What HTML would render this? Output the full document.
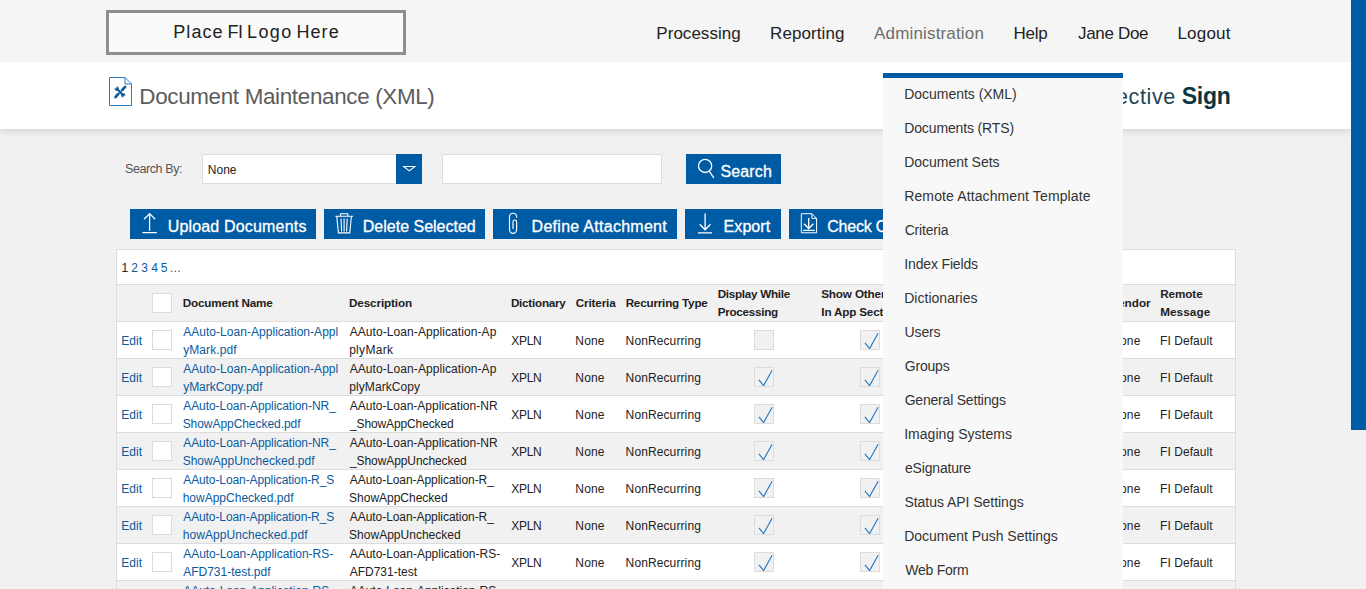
<!DOCTYPE html>
<html lang="en"><head><meta charset="utf-8"><title>Document Maintenance (XML)</title>
<style>
html,body{margin:0;padding:0}
body{width:1366px;height:589px;overflow:hidden;position:relative;background:#f1f1f1;font-family:"Liberation Sans",sans-serif;}
.b{position:absolute;box-sizing:border-box}
.b svg{display:block}
.t{position:absolute;white-space:pre;line-height:normal;font-family:"Liberation Sans",sans-serif;}
#page{position:absolute;left:0;top:0;width:1366px;height:589px;overflow:hidden}
</style></head><body><div id="page">
<div class="b" style="left:0px;top:62px;width:1351px;height:67px;background:#fff;box-shadow:0 3px 6px rgba(0,0,0,.10)"></div>
<div class="b" style="left:0px;top:0px;width:1351px;height:62px;background:#f5f5f5"></div>
<div class="b" style="left:106px;top:10px;width:300px;height:45px;box-sizing:border-box;border:3px solid #8e8e8e;background:#fafafa"></div>
<div class="b" style="left:202px;top:154px;width:220px;height:30px;box-sizing:border-box;border:1px solid #ddd;background:#fff"></div>
<div class="b" style="left:396px;top:154px;width:26px;height:30px;background:#005ba5"><svg width="26" height="30" viewBox="0 0 26 30"><path d="M7.600 12.450h11.400l-5.700 4.500z" fill="none" stroke="#fff" stroke-width="1.05" stroke-linejoin="miter"/></svg></div>
<div class="b" style="left:442px;top:154px;width:220px;height:30px;box-sizing:border-box;border:1px solid #ddd;background:#fff"></div>
<div class="b" style="left:686px;top:154px;width:95px;height:30px;background:#005ba5"><svg width="95" height="30" viewBox="0 0 95 30"><circle cx="19.1" cy="11.9" r="6.6" fill="none" stroke="#fff" stroke-width="1.3"/><path d="M23.2 17.2l4.6 6.6" stroke="#fff" stroke-width="1.3" fill="none"/></svg></div>
<div class="b" style="left:130px;top:209px;width:186px;height:30px;background:#005ba5"><svg width="186" height="30" viewBox="0 0 186 30"><path d="M19.6 4.7v17M14 10.2l5.6-5.6 5.6 5.6M12.4 23.7h14.5" stroke="#fff" stroke-width="1.3" fill="none"/></svg></div>
<div class="b" style="left:324px;top:209px;width:161px;height:30px;background:#005ba5"><svg width="161" height="30" viewBox="0 0 161 30"><path d="M11.3 7.3h17.7M16.5 7.3v-2.6h7.3v2.6M12.8 7.5l1.6 16.4h11.4l1.6-16.4M17 9.5l.6 13M20.1 9.5v13M23.2 9.5l-.6 13" stroke="#fff" stroke-width="1.1" fill="none"/></svg></div>
<div class="b" style="left:493px;top:209px;width:184px;height:30px;background:#005ba5"><svg width="184" height="30" viewBox="0 0 184 30"><path d="M23.6 8.8V7.75a3.55 3.55 0 0 0-7.1 0v13a3.55 3.55 0 0 0 7.1 0V12.8a1.8 1.8 0 0 0-3.6 0v7.1" stroke="#fff" stroke-width="1.15" fill="none"/></svg></div>
<div class="b" style="left:685px;top:209px;width:96px;height:30px;background:#005ba5"><svg width="96" height="30" viewBox="0 0 96 30"><path d="M20.1 4.4v16.4M14.7 15.3l5.4 5.5 5.4-5.5M13 23.9h14" stroke="#fff" stroke-width="1.3" fill="none"/></svg></div>
<div class="b" style="left:789px;top:209px;width:140px;height:30px;background:#005ba5"><svg width="140" height="30" viewBox="0 0 140 30"><path d="M12.3 4.7h10.6l4.7 4.700v14.400h-15.300z M22.9 4.700v4.700h4.700" stroke="#fff" stroke-width="1" fill="none"/><path d="M19.700 9v10.300M15 14.700l4.700 4.800 4.700-4.800M14 21.300h11.700" stroke="#fff" stroke-width="1.35" fill="none"/></svg></div>
<div class="b" style="left:116px;top:249px;width:1120px;height:345px;box-sizing:border-box;border:1px solid #ddd;background:#fff"></div>
<div class="b" style="left:117px;top:284px;width:1118px;height:38px;background:#f1f1f1;border-top:1px solid #ddd;border-bottom:1px solid #ddd"></div>
<div class="b" style="left:152px;top:293px;width:20px;height:20px;box-sizing:border-box;border:1px solid #dcdcdc;background:#fff"></div>
<div class="b" style="left:117px;top:358px;width:1118px;height:1px;background:#dcdcdc"></div>
<div class="b" style="left:152px;top:330px;width:20px;height:20px;box-sizing:border-box;border:1px solid #dcdcdc;background:#fff"></div>
<div class="b" style="left:754px;top:330px;width:20px;height:20px;box-sizing:border-box;border:1px solid #dcdcdc;background:#f1f1f1"></div>
<div class="b" style="left:860px;top:330px;width:20px;height:20px;box-sizing:border-box;border:1px solid #dcdcdc;background:#f1f1f1"><svg width="18" height="18" viewBox="0 0 18 18" style="position:absolute;left:0;top:0"><path d="M3.9 11.9l4.700 5.700 8.500-15.300" stroke="#1f76c4" stroke-width="1.1" fill="none"/></svg></div>
<div class="b" style="left:117px;top:359px;width:1118px;height:36px;background:#f1f1f1"></div>
<div class="b" style="left:117px;top:395px;width:1118px;height:1px;background:#dcdcdc"></div>
<div class="b" style="left:152px;top:367px;width:20px;height:20px;box-sizing:border-box;border:1px solid #dcdcdc;background:#fff"></div>
<div class="b" style="left:754px;top:367px;width:20px;height:20px;box-sizing:border-box;border:1px solid #dcdcdc;background:#f1f1f1"><svg width="18" height="18" viewBox="0 0 18 18" style="position:absolute;left:0;top:0"><path d="M3.9 11.9l4.700 5.700 8.500-15.300" stroke="#1f76c4" stroke-width="1.1" fill="none"/></svg></div>
<div class="b" style="left:860px;top:367px;width:20px;height:20px;box-sizing:border-box;border:1px solid #dcdcdc;background:#f1f1f1"><svg width="18" height="18" viewBox="0 0 18 18" style="position:absolute;left:0;top:0"><path d="M3.9 11.9l4.700 5.700 8.500-15.300" stroke="#1f76c4" stroke-width="1.1" fill="none"/></svg></div>
<div class="b" style="left:117px;top:432px;width:1118px;height:1px;background:#dcdcdc"></div>
<div class="b" style="left:152px;top:404px;width:20px;height:20px;box-sizing:border-box;border:1px solid #dcdcdc;background:#fff"></div>
<div class="b" style="left:754px;top:404px;width:20px;height:20px;box-sizing:border-box;border:1px solid #dcdcdc;background:#f1f1f1"><svg width="18" height="18" viewBox="0 0 18 18" style="position:absolute;left:0;top:0"><path d="M3.9 11.9l4.700 5.700 8.500-15.300" stroke="#1f76c4" stroke-width="1.1" fill="none"/></svg></div>
<div class="b" style="left:860px;top:404px;width:20px;height:20px;box-sizing:border-box;border:1px solid #dcdcdc;background:#f1f1f1"><svg width="18" height="18" viewBox="0 0 18 18" style="position:absolute;left:0;top:0"><path d="M3.9 11.9l4.700 5.700 8.500-15.300" stroke="#1f76c4" stroke-width="1.1" fill="none"/></svg></div>
<div class="b" style="left:117px;top:433px;width:1118px;height:36px;background:#f1f1f1"></div>
<div class="b" style="left:117px;top:469px;width:1118px;height:1px;background:#dcdcdc"></div>
<div class="b" style="left:152px;top:441px;width:20px;height:20px;box-sizing:border-box;border:1px solid #dcdcdc;background:#fff"></div>
<div class="b" style="left:754px;top:441px;width:20px;height:20px;box-sizing:border-box;border:1px solid #dcdcdc;background:#f1f1f1"><svg width="18" height="18" viewBox="0 0 18 18" style="position:absolute;left:0;top:0"><path d="M3.9 11.9l4.700 5.700 8.500-15.300" stroke="#1f76c4" stroke-width="1.1" fill="none"/></svg></div>
<div class="b" style="left:860px;top:441px;width:20px;height:20px;box-sizing:border-box;border:1px solid #dcdcdc;background:#f1f1f1"><svg width="18" height="18" viewBox="0 0 18 18" style="position:absolute;left:0;top:0"><path d="M3.9 11.9l4.700 5.700 8.500-15.300" stroke="#1f76c4" stroke-width="1.1" fill="none"/></svg></div>
<div class="b" style="left:117px;top:506px;width:1118px;height:1px;background:#dcdcdc"></div>
<div class="b" style="left:152px;top:478px;width:20px;height:20px;box-sizing:border-box;border:1px solid #dcdcdc;background:#fff"></div>
<div class="b" style="left:754px;top:478px;width:20px;height:20px;box-sizing:border-box;border:1px solid #dcdcdc;background:#f1f1f1"><svg width="18" height="18" viewBox="0 0 18 18" style="position:absolute;left:0;top:0"><path d="M3.9 11.9l4.700 5.700 8.500-15.300" stroke="#1f76c4" stroke-width="1.1" fill="none"/></svg></div>
<div class="b" style="left:860px;top:478px;width:20px;height:20px;box-sizing:border-box;border:1px solid #dcdcdc;background:#f1f1f1"><svg width="18" height="18" viewBox="0 0 18 18" style="position:absolute;left:0;top:0"><path d="M3.9 11.9l4.700 5.700 8.500-15.300" stroke="#1f76c4" stroke-width="1.1" fill="none"/></svg></div>
<div class="b" style="left:117px;top:507px;width:1118px;height:36px;background:#f1f1f1"></div>
<div class="b" style="left:117px;top:543px;width:1118px;height:1px;background:#dcdcdc"></div>
<div class="b" style="left:152px;top:515px;width:20px;height:20px;box-sizing:border-box;border:1px solid #dcdcdc;background:#fff"></div>
<div class="b" style="left:754px;top:515px;width:20px;height:20px;box-sizing:border-box;border:1px solid #dcdcdc;background:#f1f1f1"><svg width="18" height="18" viewBox="0 0 18 18" style="position:absolute;left:0;top:0"><path d="M3.9 11.9l4.700 5.700 8.500-15.300" stroke="#1f76c4" stroke-width="1.1" fill="none"/></svg></div>
<div class="b" style="left:860px;top:515px;width:20px;height:20px;box-sizing:border-box;border:1px solid #dcdcdc;background:#f1f1f1"><svg width="18" height="18" viewBox="0 0 18 18" style="position:absolute;left:0;top:0"><path d="M3.9 11.9l4.700 5.700 8.500-15.300" stroke="#1f76c4" stroke-width="1.1" fill="none"/></svg></div>
<div class="b" style="left:117px;top:580px;width:1118px;height:1px;background:#dcdcdc"></div>
<div class="b" style="left:152px;top:552px;width:20px;height:20px;box-sizing:border-box;border:1px solid #dcdcdc;background:#fff"></div>
<div class="b" style="left:754px;top:552px;width:20px;height:20px;box-sizing:border-box;border:1px solid #dcdcdc;background:#f1f1f1"><svg width="18" height="18" viewBox="0 0 18 18" style="position:absolute;left:0;top:0"><path d="M3.9 11.9l4.700 5.700 8.500-15.300" stroke="#1f76c4" stroke-width="1.1" fill="none"/></svg></div>
<div class="b" style="left:860px;top:552px;width:20px;height:20px;box-sizing:border-box;border:1px solid #dcdcdc;background:#f1f1f1"><svg width="18" height="18" viewBox="0 0 18 18" style="position:absolute;left:0;top:0"><path d="M3.9 11.9l4.700 5.700 8.500-15.300" stroke="#1f76c4" stroke-width="1.1" fill="none"/></svg></div>
<div class="b" style="left:117px;top:581px;width:1118px;height:36px;background:#f1f1f1"></div>
<div class="b" style="left:117px;top:617px;width:1118px;height:1px;background:#dcdcdc"></div>
<div class="b" style="left:152px;top:589px;width:20px;height:20px;box-sizing:border-box;border:1px solid #dcdcdc;background:#fff"></div>
<div class="b" style="left:754px;top:589px;width:20px;height:20px;box-sizing:border-box;border:1px solid #dcdcdc;background:#f1f1f1"><svg width="18" height="18" viewBox="0 0 18 18" style="position:absolute;left:0;top:0"><path d="M3.9 11.9l4.700 5.700 8.500-15.300" stroke="#1f76c4" stroke-width="1.1" fill="none"/></svg></div>
<div class="b" style="left:860px;top:589px;width:20px;height:20px;box-sizing:border-box;border:1px solid #dcdcdc;background:#f1f1f1"><svg width="18" height="18" viewBox="0 0 18 18" style="position:absolute;left:0;top:0"><path d="M3.9 11.9l4.700 5.700 8.500-15.300" stroke="#1f76c4" stroke-width="1.1" fill="none"/></svg></div>
<div class="b" style="left:108px;top:76px;width:26px;height:31px;"><svg width="26" height="31" viewBox="0 0 26 31"><path d="M1.500 1.500h15.500l6.500 6.500v21.500h-22z M17 1.500v6.500h6.500" fill="#fff" stroke="#2a7cc4" stroke-width="1"/><g fill="none" stroke="#0a5a9e"><path d="M8.800 12.800l6.400 6.400" stroke-width="2"/><circle cx="8.700" cy="12.700" r="2.100" fill="#0a5a9e" stroke="none"/><circle cx="15.300" cy="19.300" r="2.100" fill="#0a5a9e" stroke="none"/><circle cx="7.500" cy="11.400" r="1.150" fill="#fff" stroke="none"/><circle cx="16.500" cy="20.600" r="1.150" fill="#fff" stroke="none"/><path d="M17 11l-9.500 10" stroke-width="1.300"/><path d="M17.100 10.900l-2.700 2.900M10.100 18.200l-2.600 2.800" stroke-width="2.700" stroke-linecap="round"/></g></svg></div>
<span class="t" style="left:173.32px;top:21.80px;font-size:18px;color:#222;letter-spacing:1.049px;">Place</span>
<span class="t" style="left:227.48px;top:21.80px;font-size:18px;color:#222;letter-spacing:-0.518px;">FI</span>
<span class="t" style="left:246.96px;top:21.80px;font-size:18px;color:#222;letter-spacing:1.420px;">Logo</span>
<span class="t" style="left:296.45px;top:21.80px;font-size:18px;color:#222;letter-spacing:1.081px;">Here</span>
<span class="t" style="left:656.36px;top:24.00px;font-size:17px;color:#222;letter-spacing:0.019px;">Processing</span>
<span class="t" style="left:770.04px;top:24.00px;font-size:17px;color:#222;letter-spacing:0.083px;">Reporting</span>
<span class="t" style="left:874.10px;top:24.00px;font-size:17px;color:#6d6d6d;letter-spacing:0.156px;">Administration</span>
<span class="t" style="left:1013.49px;top:24.00px;font-size:17px;color:#222;letter-spacing:-0.219px;">Help</span>
<span class="t" style="left:1077.98px;top:24.00px;font-size:17px;color:#222;letter-spacing:-0.325px;">Jane Doe</span>
<span class="t" style="left:1177.49px;top:24.00px;font-size:17px;color:#222;letter-spacing:0.184px;">Logout</span>
<span class="t" style="left:139.30px;top:84.00px;font-size:22.4px;color:#5c5c5c;letter-spacing:-0.325px;">Document Maintenance (XML)</span>
<span class="t" style="left:1115.96px;top:83.60px;font-size:21.6px;color:#1d4650;letter-spacing:0.597px;">ective</span>
<span class="t" style="left:1181.79px;top:82.60px;font-size:23px;color:#0b3641;font-weight:700;letter-spacing:-0.297px;">Sign</span>
<span class="t" style="left:125.05px;top:161.80px;font-size:12.5px;color:#555;letter-spacing:-0.417px;">Search By:</span>
<span class="t" style="left:207.79px;top:162.70px;font-size:12px;color:#222;letter-spacing:0.022px;">None</span>
<span class="t" style="left:720.45px;top:162.70px;font-size:16px;color:#fff;letter-spacing:0.150px;-webkit-text-stroke:.3px #fff;">Search</span>
<span class="t" style="left:167.66px;top:217.70px;font-size:16px;color:#fff;letter-spacing:0.177px;-webkit-text-stroke:.3px #fff;">Upload Documents</span>
<span class="t" style="left:362.80px;top:217.70px;font-size:16px;color:#fff;-webkit-text-stroke:.3px #fff;">Delete Selected</span>
<span class="t" style="left:531.60px;top:217.70px;font-size:16px;color:#fff;letter-spacing:0.275px;-webkit-text-stroke:.3px #fff;">Define Attachment</span>
<span class="t" style="left:723.60px;top:217.70px;font-size:16px;color:#fff;letter-spacing:0.065px;-webkit-text-stroke:.3px #fff;">Export</span>
<span class="t" style="left:827.13px;top:217.70px;font-size:16px;color:#fff;letter-spacing:-0.196px;-webkit-text-stroke:.3px #fff;">Check Out</span>
<span class="t" style="left:121.50px;top:260.60px;font-size:12px;color:#222;">1</span>
<span class="t" style="left:131.30px;top:260.60px;font-size:12px;color:#0a5a9e;">2</span>
<span class="t" style="left:141.28px;top:260.60px;font-size:12px;color:#0a5a9e;">3</span>
<span class="t" style="left:151.32px;top:260.60px;font-size:12px;color:#0a5a9e;">4</span>
<span class="t" style="left:160.64px;top:260.60px;font-size:12px;color:#0a5a9e;">5</span>
<span class="t" style="left:169.81px;top:260.60px;font-size:12px;color:#0a5a9e;letter-spacing:0.354px;">...</span>
<span class="t" style="left:182.70px;top:296.00px;font-size:11.7px;color:#222;font-weight:700;letter-spacing:-0.176px;">Document Name</span>
<span class="t" style="left:349.02px;top:296.00px;font-size:11.7px;color:#222;font-weight:700;letter-spacing:-0.114px;">Description</span>
<span class="t" style="left:510.89px;top:296.00px;font-size:11.7px;color:#222;font-weight:700;letter-spacing:-0.243px;">Dictionary</span>
<span class="t" style="left:575.82px;top:296.00px;font-size:11.7px;color:#222;font-weight:700;letter-spacing:-0.156px;">Criteria</span>
<span class="t" style="left:625.64px;top:296.00px;font-size:11.7px;color:#222;font-weight:700;letter-spacing:-0.203px;">Recurring Type</span>
<span class="t" style="left:717.64px;top:287.00px;font-size:11.7px;color:#222;font-weight:700;letter-spacing:-0.285px;">Display While</span>
<span class="t" style="left:717.64px;top:305.00px;font-size:11.7px;color:#222;font-weight:700;letter-spacing:-0.277px;">Processing</span>
<span class="t" style="left:821.22px;top:287.00px;font-size:11.7px;color:#222;font-weight:700;letter-spacing:-0.149px;">Show Other</span>
<span class="t" style="left:821.33px;top:305.00px;font-size:11.7px;color:#222;font-weight:700;letter-spacing:-0.177px;">In App Section</span>
<span class="t" style="left:1110.85px;top:296.00px;font-size:11.7px;color:#222;font-weight:700;letter-spacing:0.039px;">Vendor</span>
<span class="t" style="left:1160.13px;top:287.00px;font-size:11.7px;color:#222;font-weight:700;letter-spacing:-0.061px;">Remote</span>
<span class="t" style="left:1160.13px;top:305.00px;font-size:11.7px;color:#222;font-weight:700;letter-spacing:0.116px;">Message</span>
<span class="t" style="left:121.26px;top:334.00px;font-size:12px;color:#0a5a9e;letter-spacing:0.018px;">Edit</span>
<span class="t" style="left:183.23px;top:325.00px;font-size:12px;color:#0a5a9e;letter-spacing:0.035px;">AAuto-Loan-Application-Appl</span>
<span class="t" style="left:183.21px;top:343.00px;font-size:12px;color:#0a5a9e;letter-spacing:0.074px;">yMark.pdf</span>
<span class="t" style="left:349.66px;top:325.00px;font-size:12px;color:#222;letter-spacing:0.082px;">AAuto-Loan-Application-Ap</span>
<span class="t" style="left:349.14px;top:343.00px;font-size:12px;color:#222;letter-spacing:0.310px;">plyMark</span>
<span class="t" style="left:511.18px;top:334.00px;font-size:12px;color:#222;letter-spacing:-0.276px;">XPLN</span>
<span class="t" style="left:575.35px;top:334.00px;font-size:12px;color:#222;letter-spacing:0.153px;">None</span>
<span class="t" style="left:625.61px;top:334.00px;font-size:12px;color:#222;letter-spacing:0.109px;">NonRecurring</span>
<span class="t" style="left:1111.26px;top:334.00px;font-size:12px;color:#222;letter-spacing:0.136px;">None</span>
<span class="t" style="left:1160.02px;top:334.00px;font-size:12px;color:#222;letter-spacing:0.059px;">FI Default</span>
<span class="t" style="left:121.26px;top:371.00px;font-size:12px;color:#0a5a9e;letter-spacing:0.018px;">Edit</span>
<span class="t" style="left:183.23px;top:362.00px;font-size:12px;color:#0a5a9e;letter-spacing:0.035px;">AAuto-Loan-Application-Appl</span>
<span class="t" style="left:183.21px;top:380.00px;font-size:12px;color:#0a5a9e;letter-spacing:-0.044px;">yMarkCopy.pdf</span>
<span class="t" style="left:349.66px;top:362.00px;font-size:12px;color:#222;letter-spacing:0.082px;">AAuto-Loan-Application-Ap</span>
<span class="t" style="left:349.28px;top:380.00px;font-size:12px;color:#222;letter-spacing:0.074px;">plyMarkCopy</span>
<span class="t" style="left:511.18px;top:371.00px;font-size:12px;color:#222;letter-spacing:-0.276px;">XPLN</span>
<span class="t" style="left:575.35px;top:371.00px;font-size:12px;color:#222;letter-spacing:0.153px;">None</span>
<span class="t" style="left:625.61px;top:371.00px;font-size:12px;color:#222;letter-spacing:0.109px;">NonRecurring</span>
<span class="t" style="left:1111.26px;top:371.00px;font-size:12px;color:#222;letter-spacing:0.136px;">None</span>
<span class="t" style="left:1160.02px;top:371.00px;font-size:12px;color:#222;letter-spacing:0.059px;">FI Default</span>
<span class="t" style="left:121.26px;top:408.00px;font-size:12px;color:#0a5a9e;letter-spacing:0.018px;">Edit</span>
<span class="t" style="left:183.23px;top:399.00px;font-size:12px;color:#0a5a9e;letter-spacing:-0.060px;">AAuto-Loan-Application-NR_</span>
<span class="t" style="left:182.63px;top:417.00px;font-size:12px;color:#0a5a9e;letter-spacing:-0.052px;">ShowAppChecked.pdf</span>
<span class="t" style="left:349.80px;top:399.00px;font-size:12px;color:#222;letter-spacing:0.015px;">AAuto-Loan-Application-NR</span>
<span class="t" style="left:349.96px;top:417.00px;font-size:12px;color:#222;letter-spacing:-0.121px;">_ShowAppChecked</span>
<span class="t" style="left:511.18px;top:408.00px;font-size:12px;color:#222;letter-spacing:-0.276px;">XPLN</span>
<span class="t" style="left:575.35px;top:408.00px;font-size:12px;color:#222;letter-spacing:0.153px;">None</span>
<span class="t" style="left:625.61px;top:408.00px;font-size:12px;color:#222;letter-spacing:0.109px;">NonRecurring</span>
<span class="t" style="left:1111.26px;top:408.00px;font-size:12px;color:#222;letter-spacing:0.136px;">None</span>
<span class="t" style="left:1160.02px;top:408.00px;font-size:12px;color:#222;letter-spacing:0.059px;">FI Default</span>
<span class="t" style="left:121.26px;top:445.00px;font-size:12px;color:#0a5a9e;letter-spacing:0.018px;">Edit</span>
<span class="t" style="left:183.23px;top:436.00px;font-size:12px;color:#0a5a9e;letter-spacing:-0.060px;">AAuto-Loan-Application-NR_</span>
<span class="t" style="left:182.63px;top:454.00px;font-size:12px;color:#0a5a9e;letter-spacing:0.023px;">ShowAppUnchecked.pdf</span>
<span class="t" style="left:349.80px;top:436.00px;font-size:12px;color:#222;letter-spacing:0.015px;">AAuto-Loan-Application-NR</span>
<span class="t" style="left:349.96px;top:454.00px;font-size:12px;color:#222;letter-spacing:-0.085px;">_ShowAppUnchecked</span>
<span class="t" style="left:511.18px;top:445.00px;font-size:12px;color:#222;letter-spacing:-0.276px;">XPLN</span>
<span class="t" style="left:575.35px;top:445.00px;font-size:12px;color:#222;letter-spacing:0.153px;">None</span>
<span class="t" style="left:625.61px;top:445.00px;font-size:12px;color:#222;letter-spacing:0.109px;">NonRecurring</span>
<span class="t" style="left:1111.26px;top:445.00px;font-size:12px;color:#222;letter-spacing:0.136px;">None</span>
<span class="t" style="left:1160.02px;top:445.00px;font-size:12px;color:#222;letter-spacing:0.059px;">FI Default</span>
<span class="t" style="left:121.26px;top:482.00px;font-size:12px;color:#0a5a9e;letter-spacing:0.018px;">Edit</span>
<span class="t" style="left:183.22px;top:473.00px;font-size:12px;color:#0a5a9e;letter-spacing:-0.095px;">AAuto-Loan-Application-R_S</span>
<span class="t" style="left:182.64px;top:491.00px;font-size:12px;color:#0a5a9e;letter-spacing:0.007px;">howAppChecked.pdf</span>
<span class="t" style="left:349.80px;top:473.00px;font-size:12px;color:#222;letter-spacing:-0.057px;">AAuto-Loan-Application-R_</span>
<span class="t" style="left:349.09px;top:491.00px;font-size:12px;color:#222;letter-spacing:-0.012px;">ShowAppChecked</span>
<span class="t" style="left:511.18px;top:482.00px;font-size:12px;color:#222;letter-spacing:-0.276px;">XPLN</span>
<span class="t" style="left:575.35px;top:482.00px;font-size:12px;color:#222;letter-spacing:0.153px;">None</span>
<span class="t" style="left:625.61px;top:482.00px;font-size:12px;color:#222;letter-spacing:0.109px;">NonRecurring</span>
<span class="t" style="left:1111.26px;top:482.00px;font-size:12px;color:#222;letter-spacing:0.136px;">None</span>
<span class="t" style="left:1160.02px;top:482.00px;font-size:12px;color:#222;letter-spacing:0.059px;">FI Default</span>
<span class="t" style="left:121.26px;top:519.00px;font-size:12px;color:#0a5a9e;letter-spacing:0.018px;">Edit</span>
<span class="t" style="left:183.22px;top:510.00px;font-size:12px;color:#0a5a9e;letter-spacing:-0.095px;">AAuto-Loan-Application-R_S</span>
<span class="t" style="left:182.64px;top:528.00px;font-size:12px;color:#0a5a9e;letter-spacing:0.079px;">howAppUnchecked.pdf</span>
<span class="t" style="left:349.80px;top:510.00px;font-size:12px;color:#222;letter-spacing:-0.057px;">AAuto-Loan-Application-R_</span>
<span class="t" style="left:349.09px;top:528.00px;font-size:12px;color:#222;letter-spacing:0.012px;">ShowAppUnchecked</span>
<span class="t" style="left:511.18px;top:519.00px;font-size:12px;color:#222;letter-spacing:-0.276px;">XPLN</span>
<span class="t" style="left:575.35px;top:519.00px;font-size:12px;color:#222;letter-spacing:0.153px;">None</span>
<span class="t" style="left:625.61px;top:519.00px;font-size:12px;color:#222;letter-spacing:0.109px;">NonRecurring</span>
<span class="t" style="left:1111.26px;top:519.00px;font-size:12px;color:#222;letter-spacing:0.136px;">None</span>
<span class="t" style="left:1160.02px;top:519.00px;font-size:12px;color:#222;letter-spacing:0.059px;">FI Default</span>
<span class="t" style="left:121.26px;top:556.00px;font-size:12px;color:#0a5a9e;letter-spacing:0.018px;">Edit</span>
<span class="t" style="left:183.21px;top:547.00px;font-size:12px;color:#0a5a9e;letter-spacing:-0.033px;">AAuto-Loan-Application-RS-</span>
<span class="t" style="left:183.21px;top:565.00px;font-size:12px;color:#0a5a9e;letter-spacing:-0.007px;">AFD731-test.pdf</span>
<span class="t" style="left:349.66px;top:547.00px;font-size:12px;color:#222;letter-spacing:-0.011px;">AAuto-Loan-Application-RS-</span>
<span class="t" style="left:349.66px;top:565.00px;font-size:12px;color:#222;">AFD731-test</span>
<span class="t" style="left:511.18px;top:556.00px;font-size:12px;color:#222;letter-spacing:-0.276px;">XPLN</span>
<span class="t" style="left:575.35px;top:556.00px;font-size:12px;color:#222;letter-spacing:0.153px;">None</span>
<span class="t" style="left:625.61px;top:556.00px;font-size:12px;color:#222;letter-spacing:0.109px;">NonRecurring</span>
<span class="t" style="left:1111.26px;top:556.00px;font-size:12px;color:#222;letter-spacing:0.136px;">None</span>
<span class="t" style="left:1160.02px;top:556.00px;font-size:12px;color:#222;letter-spacing:0.059px;">FI Default</span>
<span class="t" style="left:121.26px;top:593.00px;font-size:12px;color:#0a5a9e;letter-spacing:0.018px;">Edit</span>
<span class="t" style="left:183.21px;top:584.00px;font-size:12px;color:#0a5a9e;letter-spacing:-0.033px;">AAuto-Loan-Application-RS-</span>
<span class="t" style="left:349.66px;top:584.00px;font-size:12px;color:#222;letter-spacing:-0.011px;">AAuto-Loan-Application-RS-</span>
<span class="t" style="left:511.18px;top:593.00px;font-size:12px;color:#222;letter-spacing:-0.276px;">XPLN</span>
<span class="t" style="left:575.35px;top:593.00px;font-size:12px;color:#222;letter-spacing:0.153px;">None</span>
<span class="t" style="left:625.61px;top:593.00px;font-size:12px;color:#222;letter-spacing:0.109px;">NonRecurring</span>
<span class="t" style="left:1111.26px;top:593.00px;font-size:12px;color:#222;letter-spacing:0.136px;">None</span>
<span class="t" style="left:1160.02px;top:593.00px;font-size:12px;color:#222;letter-spacing:0.059px;">FI Default</span>
<div class="b" style="left:883px;top:73px;width:240px;height:520px;background:#f8f8f8;border-top:5px solid #005ba5;box-sizing:border-box"></div>
<span class="t" style="left:904.25px;top:86.00px;font-size:14px;color:#333;letter-spacing:-0.027px;">Documents (XML)</span>
<span class="t" style="left:904.25px;top:120.00px;font-size:14px;color:#333;letter-spacing:-0.138px;">Documents (RTS)</span>
<span class="t" style="left:904.25px;top:154.00px;font-size:14px;color:#333;letter-spacing:-0.036px;">Document Sets</span>
<span class="t" style="left:904.25px;top:188.00px;font-size:14px;color:#333;letter-spacing:0.113px;">Remote Attachment Template</span>
<span class="t" style="left:904.65px;top:222.00px;font-size:14px;color:#333;letter-spacing:-0.165px;">Criteria</span>
<span class="t" style="left:904.31px;top:256.00px;font-size:14px;color:#333;letter-spacing:-0.153px;">Index Fields</span>
<span class="t" style="left:904.25px;top:290.00px;font-size:14px;color:#333;letter-spacing:0.012px;">Dictionaries</span>
<span class="t" style="left:904.61px;top:324.00px;font-size:14px;color:#333;letter-spacing:-0.163px;">Users</span>
<span class="t" style="left:904.75px;top:358.00px;font-size:14px;color:#333;letter-spacing:-0.201px;">Groups</span>
<span class="t" style="left:904.66px;top:392.00px;font-size:14px;color:#333;letter-spacing:-0.202px;">General Settings</span>
<span class="t" style="left:904.20px;top:426.00px;font-size:14px;color:#333;letter-spacing:0.031px;">Imaging Systems</span>
<span class="t" style="left:904.98px;top:460.00px;font-size:14px;color:#333;letter-spacing:-0.172px;">eSignature</span>
<span class="t" style="left:904.39px;top:494.00px;font-size:14px;color:#333;letter-spacing:-0.033px;">Status API Settings</span>
<span class="t" style="left:904.25px;top:528.00px;font-size:14px;color:#333;letter-spacing:-0.028px;">Document Push Settings</span>
<span class="t" style="left:905.23px;top:562.00px;font-size:14px;color:#333;letter-spacing:-0.233px;">Web Form</span>
<div class="b" style="left:1351px;top:0px;width:15px;height:589px;background:#f1f1f1"></div>
<div class="b" style="left:1351px;top:0px;width:15px;height:430px;background:#005ba5"></div>
</div></body></html>
